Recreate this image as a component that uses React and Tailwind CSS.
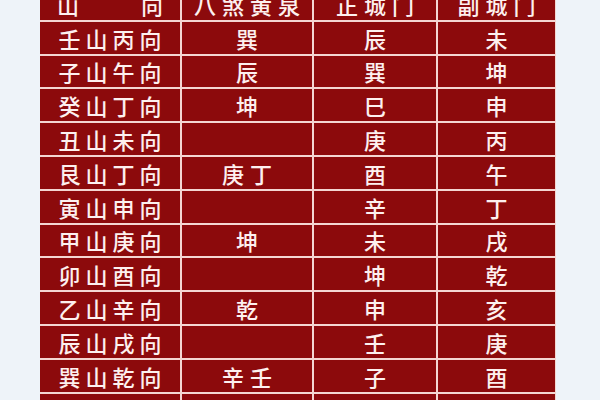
import React from 'react';

const rows = [
  ['壬山丙向', '巽', '辰', '未'],
  ['子山午向', '辰', '巽', '坤'],
  ['癸山丁向', '坤', '巳', '申'],
  ['丑山未向', '', '庚', '丙'],
  ['艮山丁向', '庚丁', '酉', '午'],
  ['寅山申向', '', '辛', '丁'],
  ['甲山庚向', '坤', '未', '戌'],
  ['卯山酉向', '', '坤', '乾'],
  ['乙山辛向', '乾', '申', '亥'],
  ['辰山戌向', '', '壬', '庚'],
  ['巽山乾向', '辛壬', '子', '酉'],
  ['巳山亥向', '', '癸', '辛'],
];

const Cell = ({ children, first }) => (
  <div
    className={
      'h-[31.8px] bg-[#8c0a0c] flex items-center justify-center text-[22px] font-medium leading-none text-[#fdf0ef] ' +
      (first ? 'tracking-[5px] pl-[5px]' : 'tracking-[6px] pl-[6px]')
    }
  >
    {children}
  </div>
);

export default function App() {
  return (
    <div
      className="w-[600px] h-[400px] overflow-hidden bg-[#eef3f9] pl-[40px]"
      style={{ fontFamily: '"Noto Sans CJK SC", "Noto Sans", sans-serif' }}
    >
      {/* table */}
      <div className="w-[516px] -mt-[12px] grid grid-cols-[140px_130px_122px_117px] gap-[2px] bg-[#f4d6d2] pr-[1px]">
        {/* header */}
        <div className="h-[31.8px] bg-[#8c0a0c] flex items-center justify-between px-[17px] text-[22px] font-medium leading-none text-[#fdf0ef]">
          <span>山</span>
          <span>向</span>
        </div>
        <Cell>八煞黄泉</Cell>
        <Cell>正城门</Cell>
        <Cell>副城门</Cell>

        {rows.map((r, i) => (
          <React.Fragment key={i}>
            <Cell first>{r[0]}</Cell>
            <Cell>{r[1]}</Cell>
            <Cell>{r[2]}</Cell>
            <Cell>{r[3]}</Cell>
          </React.Fragment>
        ))}
      </div>
    </div>
  );
}
